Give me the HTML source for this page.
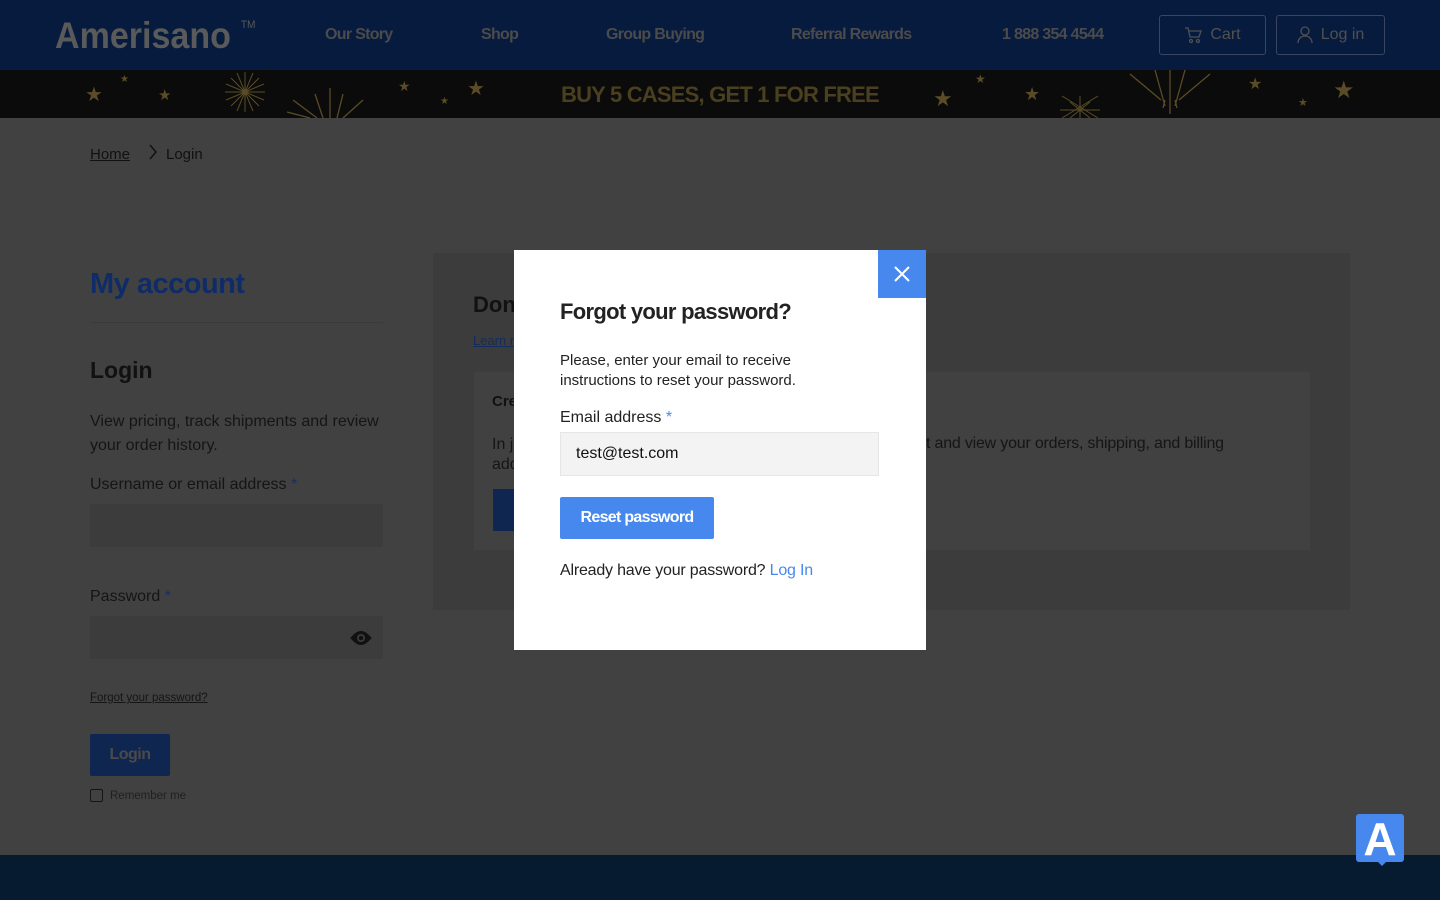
<!DOCTYPE html>
<html><head><meta charset="utf-8"><style>
*{box-sizing:border-box;margin:0;padding:0}
body{width:1440px;height:900px;overflow:hidden;background:#414141;font-family:"Liberation Sans",sans-serif;position:relative;color:#111}
.hdr{position:absolute;left:0;top:0;width:1440px;height:70px;background:#071b3f}
.logo{position:absolute;left:55px;top:15px;font-size:37px;font-weight:bold;color:#5a5a5a;transform:scaleX(0.92);transform-origin:left}
.logo sup{font-size:11px;position:absolute;left:202px;top:4px;font-weight:normal}
.nav{position:absolute;top:26px;font-size:16px;font-weight:bold;color:#4b4b4b;letter-spacing:-0.7px}
.btn{position:absolute;top:15px;height:40px;border:1px solid #3a4660;border-radius:3px;color:#505050;font-size:16px;display:flex;align-items:center;justify-content:center;gap:8px}
.ban{position:absolute;left:0;top:70px;width:1440px;height:48px;background:#0b0b0b}
.ban .t{position:absolute;left:561px;top:12px;font-size:22px;font-weight:bold;color:#4a3f1e;letter-spacing:-0.8px}
.star{position:absolute;color:#5a4c26}
.crumb{position:absolute;top:145px;font-size:15px;color:#111}
.ft{position:absolute;left:0;top:855px;width:1440px;height:45px;background:#061a30}
.modal{position:absolute;left:514px;top:250px;width:412px;height:400px;background:#fff}
.x{position:absolute;left:878px;top:250px;width:48px;height:48px;background:#4788ee}
</style></head><body>
<div class="hdr">
<div class="logo">Amerisano<sup>TM</sup></div>
<div class="nav" style="left:325px">Our Story</div>
<div class="nav" style="left:481px">Shop</div>
<div class="nav" style="left:606px">Group Buying</div>
<div class="nav" style="left:791px">Referral Rewards</div>
<div class="nav" style="left:1002px">1 888 354 4544</div>
<div class="btn" style="left:1159px;width:107px"><svg width="18" height="18" viewBox="0 0 18 18" fill="none" stroke="#505050" stroke-width="1.3"><path d="M1 2h3l2 9h9l2-6H5"/><circle cx="7" cy="15" r="1.5"/><circle cx="14" cy="15" r="1.5"/></svg>Cart</div>
<div class="btn" style="left:1276px;width:109px"><svg width="16" height="18" viewBox="0 0 16 18" fill="none" stroke="#505050" stroke-width="1.3"><circle cx="8" cy="5" r="4"/><path d="M1 17c0-4 3-7 7-7s7 3 7 7"/></svg>Log in</div>
</div>
<div class="ban">
<span class="star" style="left:85px;top:12px;font-size:20px">★</span>
<span class="star" style="left:120px;top:4px;font-size:10px">★</span>
<span class="star" style="left:158px;top:16px;font-size:15px">★</span>
<span class="star" style="left:398px;top:8px;font-size:14px">★</span>
<span class="star" style="left:440px;top:26px;font-size:10px">★</span>
<span class="star" style="left:467px;top:6px;font-size:20px">★</span>
<span class="star" style="left:933px;top:16px;font-size:22px">★</span>
<span class="star" style="left:975px;top:2px;font-size:12px">★</span>
<span class="star" style="left:1024px;top:14px;font-size:18px">★</span>
<span class="star" style="left:1248px;top:4px;font-size:16px">★</span>
<span class="star" style="left:1298px;top:26px;font-size:11px">★</span>
<span class="star" style="left:1333px;top:6px;font-size:24px">★</span>
<svg style="position:absolute;left:225px;top:2px" width="40" height="40" stroke="#5a4c26" stroke-width="1"><path d="M20 0v40M0 20h40M6 6l28 28M34 6L6 34M12 1l16 38M28 1L12 39M1 12l38 16M39 12L1 28"/></svg>
<svg style="position:absolute;left:285px;top:14px" width="90" height="34" stroke="#5a4c26" stroke-width="1.3"><path d="M45 34V4M38 34L30 10M52 34l6-24M32 34L8 16M58 34l20-18M25 34L2 28"/></svg>
<svg style="position:absolute;left:1125px;top:0" width="90" height="44" stroke="#5a4c26" stroke-width="1.3"><path d="M45 0v44M40 36L30 0M50 36L60 0M36 30L5 4M54 30L85 4M40 30l-2 8M50 30l2 8"/></svg>
<svg style="position:absolute;left:1060px;top:22px" width="40" height="26" stroke="#5a4c26" stroke-width="1"><path d="M20 4v22M2 26L38 4M38 26L2 4M10 10l20 16M30 10l-20 16M0 18h40"/></svg>
<div class="t">BUY 5 CASES, GET 1 FOR FREE</div>
</div>
<div class="crumb" style="left:90px;top:146px;text-decoration:underline">Home</div>
<svg style="position:absolute;left:147px;top:144px" width="12" height="16" fill="none" stroke="#111" stroke-width="1.5"><path d="M3 1l6 7-6 7"/></svg>
<div class="crumb" style="left:166px;top:146px">Login</div>

<div style="position:absolute;left:90px;top:268px;font-size:29px;font-weight:bold;color:#0f2c68;letter-spacing:-0.5px">My account</div>
<div style="position:absolute;left:90px;top:322px;width:293px;height:1px;background:#3a3a3a"></div>
<div style="position:absolute;left:90px;top:357px;font-size:23px;font-weight:bold">Login</div>
<div style="position:absolute;left:90px;top:410px;width:300px;font-size:16px;line-height:24px;color:#151515">View pricing, track shipments and review your order history.</div>
<div style="position:absolute;left:90px;top:476px;font-size:16px;color:#151515">Username or email address <span style="color:#1a2f5c">*</span></div>
<div style="position:absolute;left:90px;top:504px;width:293px;height:43px;background:#3c3c3c"></div>
<div style="position:absolute;left:90px;top:588px;font-size:16px;color:#151515">Password <span style="color:#1a2f5c">*</span></div>
<div style="position:absolute;left:90px;top:616px;width:293px;height:43px;background:#3c3c3c"></div>
<svg style="position:absolute;left:349px;top:630px" width="24" height="16" viewBox="0 0 24 16"><path d="M12 1C6 1 2 8 1 8c1 0 5 7 11 7s10-7 11-7c-1 0-5-7-11-7z" fill="#111"/><circle cx="12" cy="8" r="4" fill="#3c3c3c"/><circle cx="12" cy="8" r="2.3" fill="#111"/></svg>
<div style="position:absolute;left:90px;top:692px;font-size:11.5px;text-decoration:underline;color:#151515">Forgot your password?</div>
<div style="position:absolute;left:90px;top:734px;width:80px;height:42px;background:#0f2650;border-radius:2px;color:#4a4a4a;font-weight:bold;font-size:16px;text-align:center;line-height:42px;letter-spacing:-0.5px">Login</div>
<div style="position:absolute;left:90px;top:789px;width:13px;height:13px;border:1px solid #151515;border-radius:2px"></div>
<div style="position:absolute;left:110px;top:790px;font-size:11.5px;color:#202020">Remember me</div>

<div style="position:absolute;left:433px;top:253px;width:917px;height:357px;background:#3c3c3c"></div>
<div style="position:absolute;left:473px;top:292px;font-size:22px;font-weight:bold">Don't</div>
<div style="position:absolute;left:473px;top:333px;font-size:13px;color:#142c5c;text-decoration:underline">Learn more</div>
<div style="position:absolute;left:474px;top:372px;width:836px;height:178px;background:#414141"></div>
<div style="position:absolute;left:492px;top:393px;font-size:15px;font-weight:bold">Create</div>
<div style="position:absolute;left:492px;top:435px;font-size:16px;line-height:20px;color:#151515">In j<br>add</div>
<div style="position:absolute;left:926px;top:435px;font-size:16px;color:#151515;letter-spacing:-0.2px">t and view your orders, shipping, and billing</div>
<div style="position:absolute;left:493px;top:489px;width:40px;height:42px;background:#0f2650"></div>

<div class="ft"></div>
<div style="position:absolute;left:1356px;top:814px;width:48px;height:48px;background:#4788ee;border-radius:3px;color:#fff;font-weight:bold;font-size:46px;text-align:center;line-height:50px">A</div>
<div style="position:absolute;left:1377px;top:861px;border:5px solid transparent;border-top-color:#4788ee;border-bottom:0"></div>

<div class="modal">
<div style="position:absolute;left:46px;top:49px;font-size:22px;font-weight:bold;color:#222;letter-spacing:-0.7px">Forgot your password?</div>
<div style="position:absolute;left:46px;top:101px;font-size:15px;line-height:20px;color:#222;width:300px">Please, enter your email to receive instructions to reset your password.</div>
<div style="position:absolute;left:46px;top:159px;font-size:16px;color:#222">Email address <span style="color:#4788ee">*</span></div>
<div style="position:absolute;left:46px;top:182px;width:319px;height:44px;background:#f3f3f3;border:1px solid #e6e6e6;font-size:16px;padding-left:15px;line-height:42px;color:#111">test@test.com</div>
<div style="position:absolute;left:46px;top:247px;width:154px;height:42px;background:#4788ee;border-radius:2px;color:#fff;font-weight:bold;font-size:16px;text-align:center;line-height:42px;letter-spacing:-0.7px">Reset password</div>
<div style="position:absolute;left:46px;top:312px;font-size:16px;color:#222;letter-spacing:-0.2px">Already have your password? <span style="color:#4788ee">Log In</span></div>
</div>
<div class="x"><svg width="48" height="48" stroke="#fff" stroke-width="2"><path d="M17 17l14 14M31 17L17 31"/></svg></div>
</body></html>
